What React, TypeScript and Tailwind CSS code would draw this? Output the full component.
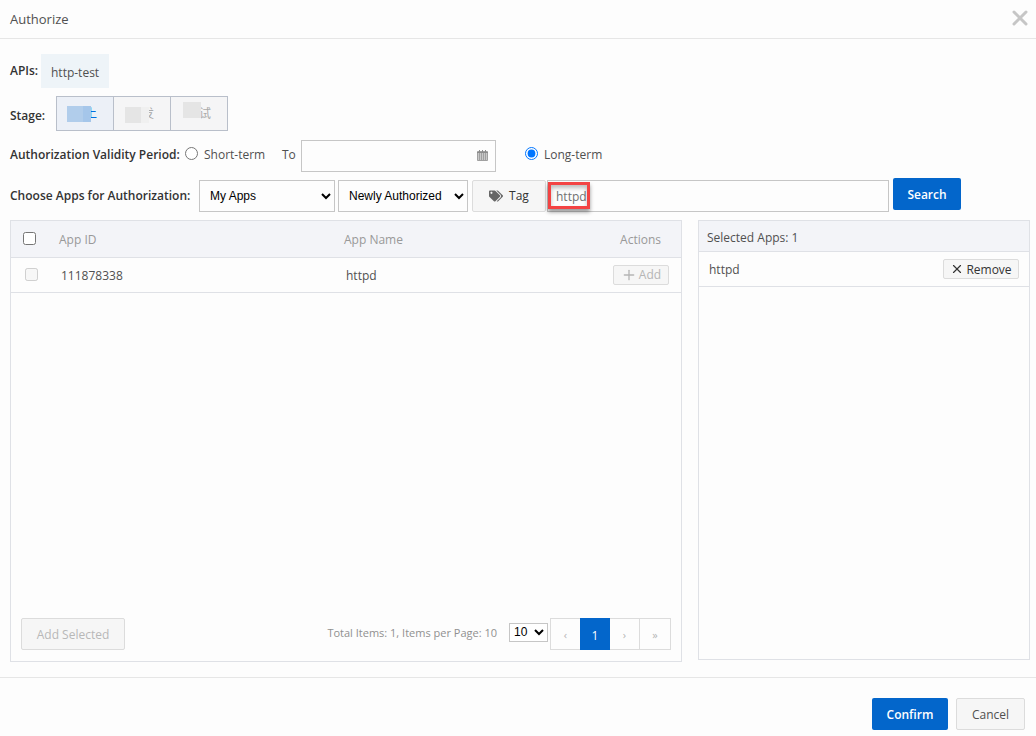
import { useState } from 'react'
import { FaTags } from 'react-icons/fa'
import { Plus, X } from 'lucide-react'

const stages = [
  { name: '线上', button: 'bg-[#ecf0f7] text-[#0070e0]', mask: 'h-4 left-[10px] top-[9px]', left: 'w-4 bg-[#b1cdeb]', right: 'w-2 bg-[#a5c6ea]' },
  { name: '预发', button: 'bg-[#f5f5f6] text-[#aaaaaa]', mask: 'h-4 left-[11px] top-[10px]', left: 'w-4 bg-[#e5e5e5]', right: 'w-2 bg-[#f0f0f0]' },
  { name: '测试', button: 'bg-[#f5f5f6] text-[#aaaaaa]', mask: 'h-5 border-b-4 border-[#f5f5f6] left-3 top-[5px]', left: 'w-4 bg-[#e5e5e5]', right: 'w-0.5 bg-[#e5e5e5]' },
]

const primaryBtn = 'h-8 rounded-xs bg-[#0366cb] pt-0.5 font-semibold text-white'
const plainBtn = 'rounded-xs border border-[#dcdcdc] bg-[#f6f6f6]'
const field = 'h-8 border border-[#c6c6c6] bg-[#fdfdfd]'

function CalendarIcon() {
  return (
    <svg width="11" height="11" viewBox="0 0 11 11" fill="none" aria-hidden="true">
      <path d="M0.5 1.5h10v9h-10z" fill="#c8c8c8" stroke="#a0a0a0" />
      <path d="M0 2.5h11" stroke="#8c8c8c" />
      <path d="M2.5 3v8M4.5 3v8M6.5 3v8M8.5 3v8" stroke="#a0a0a0" />
      <path d="M2.5 0v2M5.5 0v2M8.5 0v2" stroke="#8c8c8c" />
    </svg>
  )
}

export default function App() {
  const [period, setPeriod] = useState('long')
  const [query, setQuery] = useState('httpd')

  return (
    <main className="flex min-h-screen flex-col bg-[#fdfdfd] font-['Open_Sans','Noto_Sans_CJK_SC',sans-serif] text-[12px] leading-4 text-[#505050]">
      <header className="flex h-[39px] shrink-0 items-center justify-between border-b border-[#e6e6e6] pl-[10px] pr-1">
        <h1 className="text-[13px]">Authorize</h1>
        <button aria-label="Close" className="pb-0.5 text-[#c6c6c6]"><X size={24} strokeWidth={3} /></button>
      </header>

      <section className="flex flex-1 flex-col px-[10px] pt-[15px]">
        <div className="flex h-[34px] items-center">
          <span className="w-[31px] whitespace-nowrap font-semibold text-[#333333]">APIs:</span>
          <span className="flex h-[34px] items-center bg-[#eef4f8] px-[10px] pt-1">http-test</span>
        </div>

        <div className="mt-2 flex h-[35px] items-center">
          <span className="w-[46px] pt-1 font-semibold text-[#333333]">Stage:</span>
          <div className="flex border-l border-[#b9bfca]">
            {stages.map((s) => (
              <button key={s.name} className={`relative h-[35px] w-[57px] border-y border-r border-[#b9bfca] ${s.button}`}>
                {s.name}
                <span className={`absolute flex ${s.mask}`}>
                  <span className={s.left} />
                  <span className={s.right} />
                </span>
              </button>
            ))}
          </div>
        </div>

        <div className="mt-[9px] flex h-8 items-center">
          <span className="w-[175px] whitespace-nowrap pb-0.5 font-semibold text-[#333333]">Authorization Validity Period:</span>
          <input id="short" type="radio" name="period" className="mb-[6px] h-[13px] w-[13px]" checked={period === 'short'} onChange={() => setPeriod('short')} />
          <label htmlFor="short" className="ml-[6px] w-[78px] whitespace-nowrap pb-0.5">Short-term</label>
          <label htmlFor="until" className="w-[19px] pb-0.5">To</label>
          <div className="relative w-[195px]">
            <input id="until" className={`${field} w-full px-2`} />
            <span className="absolute right-2 top-[10px]"><CalendarIcon /></span>
          </div>
          <input id="long" type="radio" name="period" className="mb-[6px] ml-[29px] h-[13px] w-[13px]" checked={period === 'long'} onChange={() => setPeriod('long')} />
          <label htmlFor="long" className="ml-[6px] pb-0.5">Long-term</label>
        </div>

        <div className="mt-2 flex h-8 items-center pr-[65px]">
          <span className="w-[189px] whitespace-nowrap font-semibold text-[#333333]">Choose Apps for Authorization:</span>
          <select aria-label="App scope" className={`${field} w-[136px] pl-[6px] font-['Liberation_Sans',sans-serif] text-black`}>
            <option>My Apps</option>
          </select>
          <select aria-label="Authorization order" className={`${field} ml-[3px] w-[130px] pl-[6px] font-['Liberation_Sans',sans-serif] text-black`}>
            <option>Newly Authorized</option>
          </select>
          <button className={`${plainBtn} ml-1 flex h-8 w-[74px] items-center justify-center gap-[6px] text-[#333333]`}>
            <FaTags size={14} className="text-[#666666]" />
            Tag
          </button>
          <div className="relative ml-px flex-1">
            <input aria-label="App name" className={`${field} w-full px-2 text-[#707070]`} value={query} onChange={(e) => setQuery(e.target.value)} />
            <span className="pointer-events-none absolute left-px top-[2px] h-[27px] w-[42px] border-3 border-[#f34343] shadow-[0_3px_4px_rgba(0,0,0,0.4),inset_0_3px_4px_rgba(0,0,0,0.25)]" />
          </div>
          <button className={`${primaryBtn} mb-1 ml-1 w-[68px]`}>Search</button>
        </div>

        <div className="-mr-1 mt-2 grid flex-1 grid-cols-[672fr_332fr] gap-4 pb-[15px]">
          <div className="flex flex-col border border-[#dfe1e6]">
            <table className="w-full table-fixed text-left">
              <thead className="text-[#999999]">
                <tr className="h-9 border-b border-[#dfe1e6] bg-[#f3f4f8]">
                  <th className="w-12 pl-3"><input type="checkbox" aria-label="Select all" className="block h-[13px] w-[13px]" /></th>
                  <th className="w-[285px] pt-0.5 font-normal">App ID</th>
                  <th className="pt-0.5 font-normal">App Name</th>
                  <th className="w-20 pr-5 pt-0.5 text-right font-normal">Actions</th>
                </tr>
              </thead>
              <tbody>
                <tr className="h-[35px] border-b border-[#dfe1e6]">
                  <td className="pl-[14px]"><input type="checkbox" aria-label="Select httpd" disabled className="block h-[13px] w-[13px]" /></td>
                  <td className="pl-0.5 pt-0.5">111878338</td>
                  <td className="pl-0.5 pt-0.5">httpd</td>
                  <td className="pr-3">
                    <button disabled className={`${plainBtn} ml-auto flex h-5 w-14 items-center justify-center gap-0.5 text-[#b5b5b5]`}>
                      <Plus size={16} strokeWidth={2} />
                      Add
                    </button>
                  </td>
                </tr>
              </tbody>
            </table>
            <div className="mt-auto flex items-center justify-between px-[10px] pb-[11px]">
              <button disabled className={`${plainBtn} h-8 w-[104px] pt-0.5 text-[#b8b8b8]`}>Add Selected</button>
              <div className="flex items-center">
                <label htmlFor="size" className="mr-3 pb-0.5 text-[11px] text-[#909090]">Total Items: 1, Items per Page: 10</label>
                <select id="size" className="mb-1 mr-0.5 h-[19px] w-[39px] border border-[#c6c6c6] bg-white font-['Liberation_Sans',sans-serif] text-black">
                  <option>10</option>
                </select>
                <nav aria-label="Pages" className="flex h-8 border border-r-0 border-[#dcdcdc] text-[#b5b5b5]">
                  <button className="w-[29px] pt-0.5 text-[11px]">‹</button>
                  <button className="-my-px w-[30px] bg-[#0366cb] pt-1 text-white">1</button>
                  <button className="w-[30px] border-r border-[#dcdcdc] pt-0.5 text-[11px]">›</button>
                  <button className="w-[31px] border-r border-[#dcdcdc] pt-0.5 text-[11px]">»</button>
                </nav>
              </div>
            </div>
          </div>

          <div className="mb-0.5 border border-[#dfe1e6]">
            <h2 className="flex h-[31px] items-center border-b border-[#dfe1e6] bg-[#f3f4f8] px-2 pt-1">Selected Apps: 1</h2>
            <div className="flex h-[35px] items-center justify-between border-b border-[#dfe1e6] px-[10px]">
              <span className="pt-0.5">httpd</span>
              <button className={`${plainBtn} flex h-5 w-[76px] items-center justify-center gap-0.5 text-[#333333]`}>
                <X size={14} strokeWidth={2} />
                <span className="pt-0.5">Remove</span>
              </button>
            </div>
          </div>
        </div>
      </section>

      <footer className="flex shrink-0 justify-end gap-2 border-t border-[#e6e6e6] pb-[6px] pr-[11px] pt-5">
        <button className={`${primaryBtn} w-19`}>Confirm</button>
        <button className={`${plainBtn} h-8 w-[69px] pt-0.5`}>Cancel</button>
      </footer>
    </main>
  )
}
